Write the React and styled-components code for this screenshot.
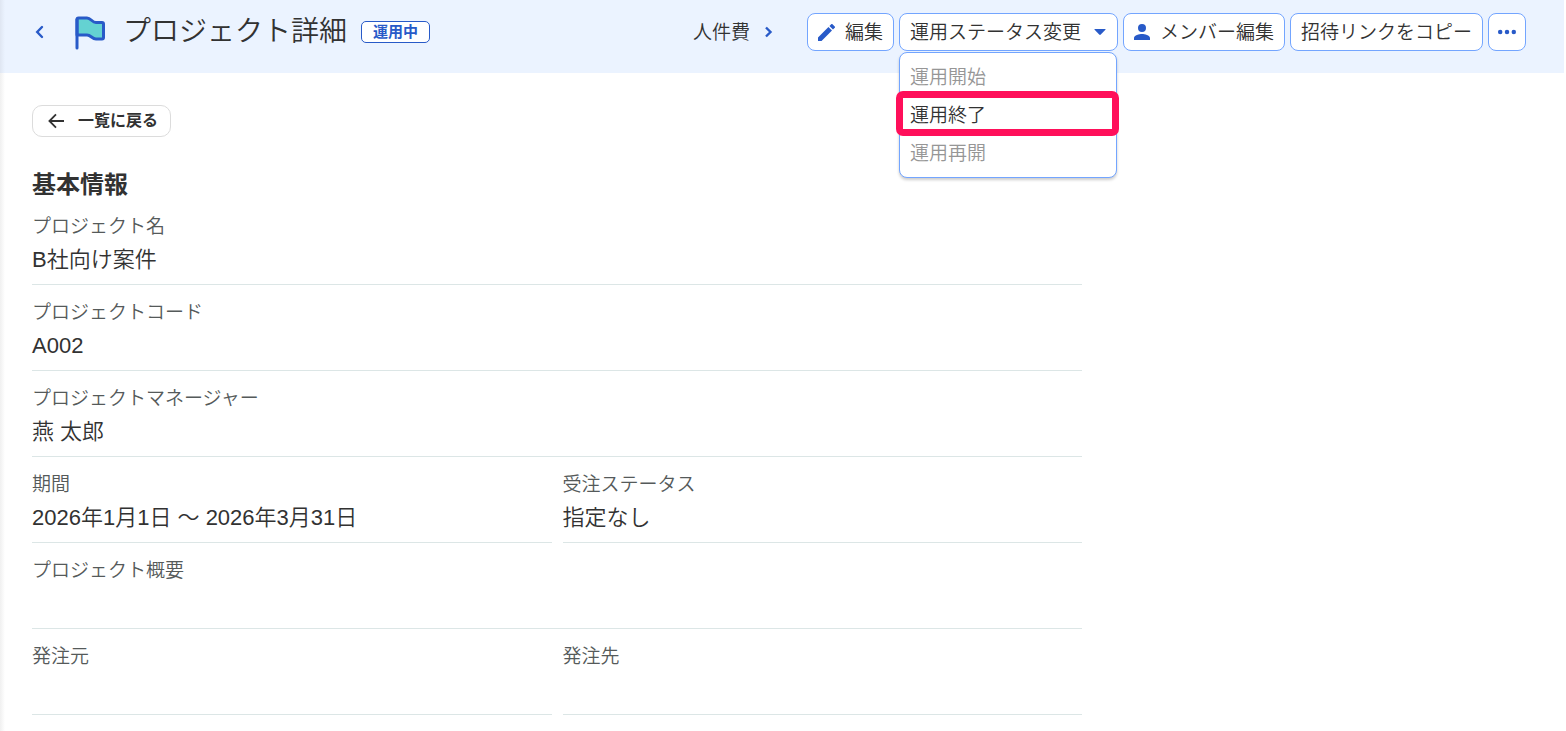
import React from 'react';
import styled, { createGlobalStyle } from 'styled-components';

const colours = {
    blue: '#285ac8',
    border: '#73a5ff',
    header: '#ebf3ff',
    text: '#323232',
    label: '#555a5a',
    disabled: '#969696',
    line: '#dce6e6',
    mark: '#ff0f5a',
};

const GlobalStyle = createGlobalStyle`
    * {
        box-sizing: border-box;
    }
    body {
        margin: 0;
        background: #fff;
        color: ${colours.text};
        font-family: "Liberation Sans", "Noto Sans CJK JP", sans-serif;
        font-weight: 350;
    }
    button {
        font-family: inherit;
        font-weight: inherit;
        color: inherit;
        cursor: pointer;
    }
`;

const Page = styled.div`
    min-height: 100vh;
    padding-right: 2px;
    background: linear-gradient(to right, #f0f0f0, #fff 5px);
`;

const Header = styled.header`
    display: flex;
    align-items: flex-start;
    justify-content: space-between;
    height: 73px;
    padding: 13px 38px 0 32px;
    background: linear-gradient(to right, #dfe6f2, ${colours.header} 5px);
`;

const TitleGroup = styled.div`
    display: flex;
    align-items: center;
    height: 38px;
`;

const IconButton = styled.button`
    display: flex;
    padding: 0;
    border: 0;
    background: none;
`;

const FlagIcon = styled.svg`
    margin: 0 17px 0 26px;
`;

const Title = styled.h1`
    margin: 0 14px 0 0;
    font-size: 28px;
    font-weight: 350;
    line-height: 36px;
`;

const Badge = styled.span`
    padding: 0 11px;
    border: 1px solid ${colours.blue};
    border-radius: 5px;
    background: #fff;
    color: ${colours.blue};
    font-size: 15px;
    font-weight: 700;
    line-height: 20px;
`;

const Actions = styled.div`
    display: flex;
    align-items: center;
    gap: 5px;
`;

const CostLink = styled.a`
    display: flex;
    align-items: center;
    gap: 14px;
    margin-right: 29px;
    color: inherit;
    font-size: 19px;
    line-height: 34px;
    text-decoration: none;
`;

const ActionButton = styled.button`
    display: flex;
    align-items: center;
    justify-content: center;
    gap: ${({ $gap }) => $gap || 10}px;
    height: 38px;
    padding: 0 10px;
    border: 1px solid ${colours.border};
    border-radius: 8px;
    background: #fff;
    font-size: 19px;
    line-height: 34px;
    white-space: nowrap;
`;

const ActionText = styled.span`
    padding-top: 2px;
`;

const Dropdown = styled.div`
    position: relative;
`;

const Menu = styled.ul`
    position: absolute;
    top: 39px;
    left: 0;
    right: 1px;
    margin: 0;
    padding: 6px 0 4px;
    border: 1px solid ${colours.border};
    border-radius: 8px;
    background: #fff;
    box-shadow: 0 2px 3px rgba(0, 0, 0, 0.2);
    list-style: none;
`;

const MenuItem = styled.li`
    position: relative;
`;

const MenuButton = styled.button`
    display: block;
    width: 100%;
    padding: 0 10px;
    border: 0;
    background: none;
    font-size: 19px;
    line-height: 38px;
    text-align: left;

    &:disabled {
        color: ${colours.disabled};
        cursor: default;
    }
`;

const Highlight = styled.span`
    position: absolute;
    top: -6px;
    bottom: -1px;
    left: -4px;
    right: -3px;
    border: 7px solid ${colours.mark};
    border-radius: 7px;
    pointer-events: none;
`;

const Main = styled.main`
    padding: 32px;
`;

const BackButton = styled.button`
    display: flex;
    align-items: center;
    gap: 14px;
    height: 32px;
    padding: 0 12px 0 15px;
    border: 1px solid #dcdcdc;
    border-radius: 10px;
    background: #fff;
    font-size: 16px;
    font-weight: 700;
    line-height: 30px;
`;

const SectionTitle = styled.h2`
    margin: 34px 0 0;
    font-size: 24px;
    font-weight: 700;
    line-height: 28px;
`;

const Fields = styled.dl`
    display: grid;
    grid-template-columns: 1fr 1fr;
    column-gap: 11px;
    width: 70%;
    margin: 0;
`;

const Field = styled.div`
    grid-column: ${({ $half }) => ($half ? 'auto' : '1 / -1')};
    height: 86px;
    padding-top: 12px;
    border-bottom: 1px solid ${colours.line};
`;

const Label = styled.dt`
    color: ${colours.label};
    font-size: 19px;
    line-height: 32px;
`;

const Value = styled.dd`
    margin: 0;
    font-size: 22px;
    line-height: 34px;
`;

const fields = [
    { label: 'プロジェクト名', value: 'B社向け案件' },
    { label: 'プロジェクトコード', value: 'A002' },
    { label: 'プロジェクトマネージャー', value: '燕 太郎' },
    { label: '期間', value: '2026年1月1日 ～ 2026年3月31日', half: true },
    { label: '受注ステータス', value: '指定なし', half: true },
    { label: 'プロジェクト概要', value: '' },
    { label: '発注元', value: '', half: true },
    { label: '発注先', value: '', half: true },
];

const menuItems = [
    { label: '運用開始', disabled: true },
    { label: '運用終了', marked: true },
    { label: '運用再開', disabled: true },
];

const StatusMenu = () => (
    <Dropdown>
        <ActionButton $gap={13} aria-haspopup="true" aria-expanded="true">
            <ActionText>運用ステータス変更</ActionText>
            <svg width="13" height="6" viewBox="0 0 13 6" fill={colours.blue}>
                <path d="M1 0h10q1 0 .4.8L6.8 5.6q-.8.6-1.6 0L.6.8Q0 0 1 0z" />
            </svg>
        </ActionButton>
        <Menu>
            {menuItems.map((item) => (
                <MenuItem key={item.label}>
                    <MenuButton disabled={item.disabled}>{item.label}</MenuButton>
                    {item.marked && <Highlight />}
                </MenuItem>
            ))}
        </Menu>
    </Dropdown>
);

const App = () => (
    <Page>
        <GlobalStyle />
        <Header>
            <TitleGroup>
                <IconButton aria-label="前へ">
                    <svg width="16" height="16" viewBox="0 0 16 16" fill="none" stroke={colours.blue} strokeWidth="2.4" strokeLinecap="round">
                        <path d="M10 3 5.2 8l4.800 5" />
                    </svg>
                </IconButton>
                <FlagIcon width="32" height="36" viewBox="0 -2 32 36" fill="none" stroke={colours.blue} strokeWidth="3" strokeLinecap="round" strokeLinejoin="round">
                    <path d="M3 19V3.500Q3 2 4.500 2H13c4 0 5 4.500 9 4.500h6q1.500 0 1.500 1.500v13.500q0 1.500-1.500 1.500h-6c-4 0-5-4-9-4H3" fill="#64d2d2" />
                    <path d="M3 3.500V32" />
                </FlagIcon>
                <Title>プロジェクト詳細</Title>
                <Badge>運用中</Badge>
            </TitleGroup>
            <Actions>
                <CostLink href="#cost">
                    <ActionText>人件費</ActionText>
                    <svg width="9" height="12" viewBox="0 0 9 12" fill="none" stroke={colours.blue} strokeWidth="2.4">
                        <path d="M2 1.500 6.500 6 2 10.500" />
                    </svg>
                </CostLink>
                <ActionButton>
                    <svg width="17" height="17" viewBox="3 3 18 18" fill={colours.blue}>
                        <path d="M3 17.250V21h3.750L17.810 9.940l-3.750-3.750L3 17.250zM20.710 7.040a1 1 0 0 0 0-1.410l-2.340-2.340a1 1 0 0 0-1.410 0l-1.830 1.830 3.750 3.750 1.830-1.830z" />
                    </svg>
                    <ActionText>編集</ActionText>
                </ActionButton>
                <StatusMenu />
                <ActionButton>
                    <svg width="16" height="16" viewBox="4 4 16 16" fill={colours.blue}>
                        <path d="M12 12a4 4 0 1 0 0-8 4 4 0 0 0 0 8zm0 2c-2.670 0-8 1.340-8 4v2h16v-2c0-2.660-5.330-4-8-4z" />
                    </svg>
                    <ActionText>メンバー編集</ActionText>
                </ActionButton>
                <ActionButton>
                    <ActionText>招待リンクをコピー</ActionText>
                </ActionButton>
                <ActionButton aria-label="その他">
                    <svg width="16" height="6" viewBox="-1 0 20 6" overflow="visible" fill={colours.blue}>
                        <circle cx="0.500" cy="3" r="2.800" />
                        <circle cx="9" cy="3" r="2.800" />
                        <circle cx="17.500" cy="3" r="2.800" />
                    </svg>
                </ActionButton>
            </Actions>
        </Header>
        <Main>
            <BackButton>
                <svg width="16" height="16" viewBox="0 0 17 16" fill="none" stroke={colours.text} strokeWidth="1.900">
                    <path d="M8.500 1 1.500 8l7 7M1.500 8H17" />
                </svg>
                一覧に戻る
            </BackButton>
            <SectionTitle>基本情報</SectionTitle>
            <Fields>
                {fields.map((field) => (
                    <Field key={field.label} $half={field.half}>
                        <Label>{field.label}</Label>
                        <Value>{field.value}</Value>
                    </Field>
                ))}
            </Fields>
        </Main>
    </Page>
);

export default App;
